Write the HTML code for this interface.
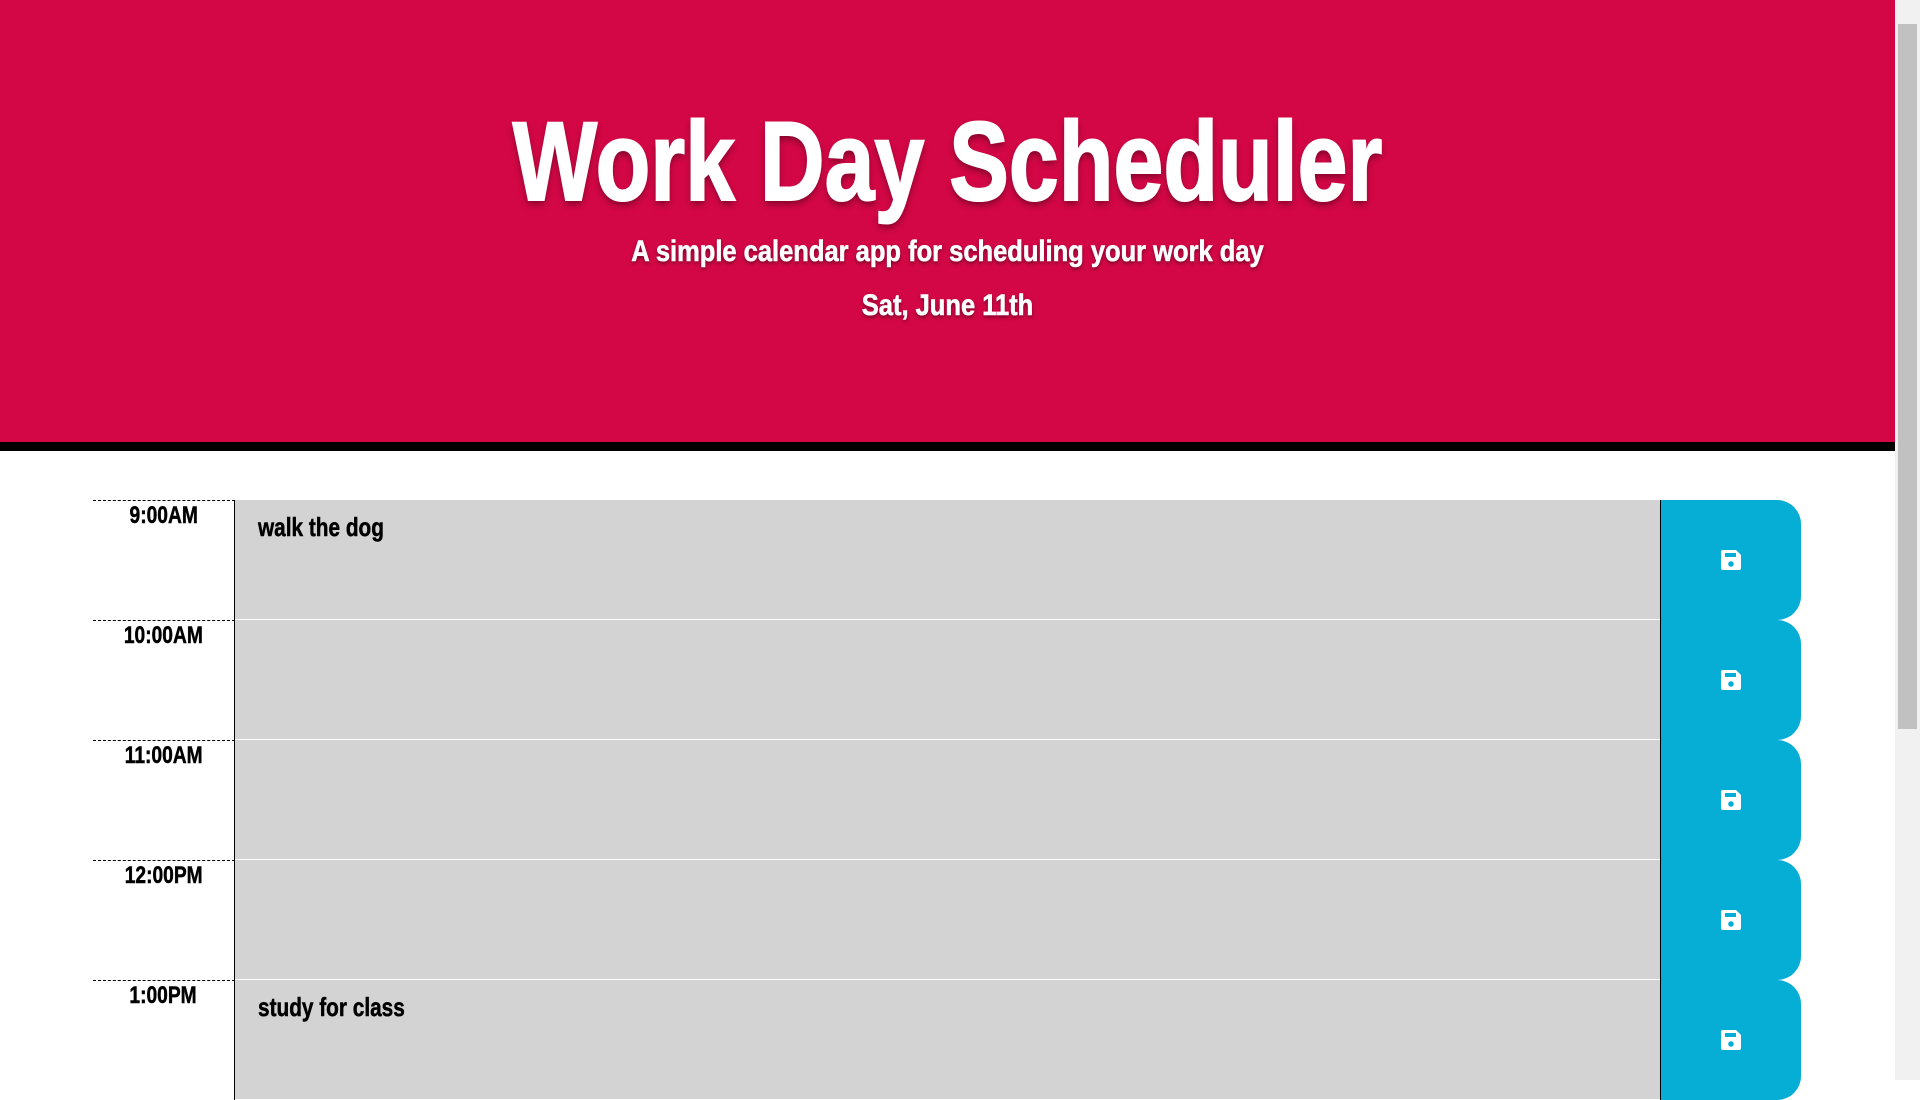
<!DOCTYPE html>
<html><head><style>
html,body{margin:0;padding:0;}
body{width:1895px;height:1080px;overflow:hidden;background:#fff;font-family:Impact,"Liberation Sans Narrow","Liberation Sans",sans-serif;}
.hd{height:442px;background:#d30745;border-bottom:9px solid #000;text-align:center;color:#fff;}
.hd h1{margin:0;padding-top:104px;font-size:112px;font-weight:bold;line-height:116px;text-shadow:0 4px 8px rgba(0,0,0,.4);transform:scaleX(.8);-webkit-text-stroke:2px #fff;}
.hd p{margin:0;font-size:30px;font-weight:bold;text-shadow:0 2px 4px rgba(0,0,0,.5);transform:scaleX(.85);-webkit-text-stroke:0.6px #fff;}
.hd .s{margin-top:12px;line-height:40px;}
.hd .d{margin-top:14px;line-height:40px;}
.rows{position:absolute;top:500px;left:93px;}
.row{display:flex;height:120px;}
.t{width:142px;border-top:1px dashed #000;border-right:1px solid #000;box-sizing:border-box;text-align:center;font-size:24px;font-weight:bold;padding-top:1px;}
.t span{display:inline-block;transform:scaleX(.8);-webkit-text-stroke:0.5px #000;}
.a{width:1425px;background:#d3d3d3;border-bottom:1px solid #fff;box-sizing:border-box;font-size:26px;font-weight:bold;padding:12px 0 0 23px;}
.a span{display:inline-block;transform:scaleX(.8);transform-origin:left;-webkit-text-stroke:0.5px #000;}
.b{width:141px;background:#06aed5;border-left:1px solid #000;border-radius:0 24px 24px 0;box-sizing:border-box;display:flex;align-items:center;justify-content:center;}
.sb{position:absolute;left:1895px;top:0;width:25px;height:1080px;background:#f1f1f1;}
.sb div{position:absolute;left:3px;top:24px;width:19px;height:705px;background:#c1c1c1;}
</style></head><body>
<div class="hd"><h1>Work Day Scheduler</h1><p class="s">A simple calendar app for scheduling your work day</p><p class="d">Sat, June 11th</p></div>
<div class="rows">
<div class="row"><div class="t"><span>9:00AM</span></div><div class="a"><span>walk the dog</span></div><div class="b"><svg width="22" height="22" viewBox="0 0 22 22"><path d="M3 1h13l5 5v13a2 2 0 0 1-2 2H3a2 2 0 0 1-2-2V3a2 2 0 0 1 2-2z" fill="#fff"/><rect x="5" y="4" width="11" height="4" fill="#06aed5"/><circle cx="11" cy="15" r="2.8" fill="#06aed5"/></svg></div></div>
<div class="row"><div class="t"><span>10:00AM</span></div><div class="a"></div><div class="b"><svg width="22" height="22" viewBox="0 0 22 22"><path d="M3 1h13l5 5v13a2 2 0 0 1-2 2H3a2 2 0 0 1-2-2V3a2 2 0 0 1 2-2z" fill="#fff"/><rect x="5" y="4" width="11" height="4" fill="#06aed5"/><circle cx="11" cy="15" r="2.8" fill="#06aed5"/></svg></div></div>
<div class="row"><div class="t"><span>11:00AM</span></div><div class="a"></div><div class="b"><svg width="22" height="22" viewBox="0 0 22 22"><path d="M3 1h13l5 5v13a2 2 0 0 1-2 2H3a2 2 0 0 1-2-2V3a2 2 0 0 1 2-2z" fill="#fff"/><rect x="5" y="4" width="11" height="4" fill="#06aed5"/><circle cx="11" cy="15" r="2.8" fill="#06aed5"/></svg></div></div>
<div class="row"><div class="t"><span>12:00PM</span></div><div class="a"></div><div class="b"><svg width="22" height="22" viewBox="0 0 22 22"><path d="M3 1h13l5 5v13a2 2 0 0 1-2 2H3a2 2 0 0 1-2-2V3a2 2 0 0 1 2-2z" fill="#fff"/><rect x="5" y="4" width="11" height="4" fill="#06aed5"/><circle cx="11" cy="15" r="2.8" fill="#06aed5"/></svg></div></div>
<div class="row"><div class="t"><span>1:00PM</span></div><div class="a"><span>study for class</span></div><div class="b"><svg width="22" height="22" viewBox="0 0 22 22"><path d="M3 1h13l5 5v13a2 2 0 0 1-2 2H3a2 2 0 0 1-2-2V3a2 2 0 0 1 2-2z" fill="#fff"/><rect x="5" y="4" width="11" height="4" fill="#06aed5"/><circle cx="11" cy="15" r="2.8" fill="#06aed5"/></svg></div></div>
</div>
<div class="sb"><div></div></div>
</body></html>
